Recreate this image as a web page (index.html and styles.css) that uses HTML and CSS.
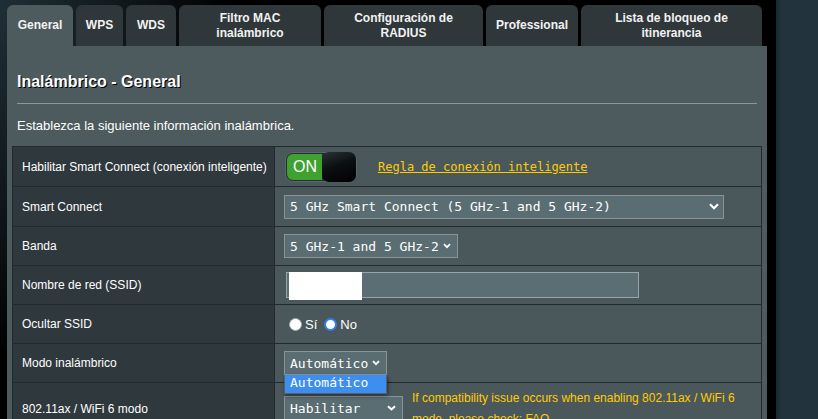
FILE: index.html
```html
<!DOCTYPE html>
<html lang="es">
<head>
<meta charset="utf-8">
<title>Inalámbrico - General</title>
<link rel="stylesheet" href="styles.css">
</head>
<body>
<div class="page">
  <div class="side-left"></div>
  <main class="main">
    <nav class="tabs">
      <div class="tab tab-active t-general">General</div>
      <div class="tab t-wps">WPS</div>
      <div class="tab t-wds">WDS</div>
      <div class="tab t-mac">Filtro MAC<br>inalámbrico</div>
      <div class="tab t-radius">Configuración de<br>RADIUS</div>
      <div class="tab t-pro">Professional</div>
      <div class="tab t-roam">Lista de bloqueo de<br>itinerancia</div>
    </nav>
    <section class="panel">
      <h1 class="title">Inalámbrico - General</h1>
      <div class="divider"></div>
      <p class="desc">Establezca la siguiente información inalámbrica.</p>
      <div class="form">
        <div class="row">
          <div class="label">Habilitar Smart Connect (conexión inteligente)</div>
          <div class="value">
            <div class="switch"><span class="switch-on">ON</span><span class="switch-knob"></span></div>
            <a class="rule-link" href="#">Regla de conexión inteligente</a>
          </div>
        </div>
        <div class="row">
          <div class="label">Smart Connect</div>
          <div class="value">
            <div class="select select-wide"><span>5 GHz Smart Connect (5 GHz-1 and 5 GHz-2)</span>
              <svg class="chev-big" width="10" height="7" viewBox="0 0 10 7"><polyline points="1,1.2 5,5.2 9,1.2" fill="none" stroke="#fff" stroke-width="2.2"/></svg>
            </div>
          </div>
        </div>
        <div class="row row-s">
          <div class="label">Banda</div>
          <div class="value">
            <div class="select"><span>5 GHz-1 and 5 GHz-2</span>
              <svg width="8" height="6" viewBox="0 0 8 6"><polyline points="1,1.2 4,4.2 7,1.2" fill="none" stroke="#fff" stroke-width="1.8"/></svg>
            </div>
          </div>
        </div>
        <div class="row row-s">
          <div class="label">Nombre de red (SSID)</div>
          <div class="value">
            <div class="text-input"><span class="redact"></span></div>
          </div>
        </div>
        <div class="row row-s">
          <div class="label">Ocultar SSID</div>
          <div class="value">
            <label class="radio-opt"><span class="radio"></span>Sí</label>
            <label class="radio-opt"><span class="radio radio-checked"></span>No</label>
          </div>
        </div>
        <div class="row row-s row-over">
          <div class="label">Modo inalámbrico</div>
          <div class="value">
            <div class="select-wrap">
              <div class="select"><span>Automático</span>
                <svg width="8" height="6" viewBox="0 0 8 6"><polyline points="1,1.2 4,4.2 7,1.2" fill="none" stroke="#fff" stroke-width="1.8"/></svg>
              </div>
              <div class="dropdown">Automático</div>
            </div>
          </div>
        </div>
        <div class="row row-last">
          <div class="label">802.11ax / WiFi 6 modo</div>
          <div class="value value-top">
            <div class="select select-hab"><span>Habilitar</span>
              <svg width="9" height="6" viewBox="0 0 9 6"><polyline points="1,1.2 4.5,4.5 8,1.2" fill="none" stroke="#fff" stroke-width="2"/></svg>
            </div>
            <p class="note">If compatibility issue occurs when enabling 802.11ax / WiFi 6 mode, please check: <a href="#" class="note-link">FAQ</a></p>
          </div>
        </div>
      </div>
    </section>
  </main>
  <div class="gutter"></div>
  <div class="side-right"></div>
</div>
</body>
</html>
```

FILE: styles.css
```css
* { box-sizing: border-box; }
html, body { margin: 0; padding: 0; }
body {
  background: #000;
  color: #fff;
  font-family: "Liberation Sans", Arial, sans-serif;
  overflow: hidden;
}
.page {
  display: flex;
  width: 818px;
  height: 419px;
  overflow: hidden;
  background: radial-gradient(ellipse 230px 360px at 0 0, #1f2f36 0%, #0e1518 60%, #000 100%);
}
.side-left { width: 7px; flex: none; }
.main { width: 760px; flex: none; display: flex; flex-direction: column; }
.gutter { width: 9px; flex: none; background: #000; }
.side-right {
  flex: 1;
  background: linear-gradient(90deg, #18262d 0, #22333d 5px, #22333d 100%);
}

/* tabs */
.tabs { display: flex; gap: 3px; padding-top: 5px; height: 46px; flex: none; }
.tab {
  height: 41px;
  border-radius: 6px 6px 0 0;
  background: #30373b;
  color: #f2f2f2;
  font: bold 12px/15px "Liberation Sans", Arial, sans-serif;
  display: flex;
  align-items: center;
  justify-content: center;
  text-align: center;
}
.tab-active { background: #4d5a5e; }
.t-general { width: 66px; }
.t-wps { width: 47px; }
.t-wds { width: 50px; }
.t-mac { width: 142px; }
.t-radius { width: 159px; }
.t-pro { width: 92px; }
.t-roam { width: 181px; }

/* panel */
.panel { flex: 1; background: #4d5a5e; padding: 26px 5px 0; }
.title {
  margin: 0 0 0 5px;
  font: bold 16px/20px "Liberation Sans", Arial, sans-serif;
  color: #fff;
  text-shadow: 1px 1px 0 #000;
}
.divider { height: 1px; background: #8a989c; margin: 11px 5px 0; }
.desc { margin: 14px 0 0 5px; font-size: 13px; line-height: 16px; color: #fff; }

/* form table */
.form { margin-top: 12px; width: 750px; border: 1px solid #222a2e; border-bottom: 0; }
.row { display: flex; height: 40px; border-bottom: 1px solid #222a2e; }
.row-s { height: 39px; }
.row-last { height: 51px; border-bottom: 0; }
.row-over { position: relative; z-index: 2; }
.label {
  width: 262px;
  flex: none;
  background: #2f383d;
  border-right: 1px solid #222a2e;
  padding-left: 9px;
  display: flex;
  align-items: center;
  font-size: 12px;
  color: #fff;
}
.value {
  flex: 1;
  background: #4a585c;
  padding-left: 9px;
  display: flex;
  align-items: center;
}
.value-top { align-items: flex-start; padding-top: 5px; }

/* switch */
.switch {
  width: 72px;
  height: 30px;
  margin-left: 1px;
  border: 1px solid #5b676b;
  border-radius: 8px;
  background: #263034;
  display: flex;
  align-items: center;
  padding-left: 1px;
}
.switch-on {
  width: 36px;
  height: 26px;
  background: #3ea130;
  border-radius: 6px 0 0 6px;
  color: #fff;
  font: 16px/26px "Liberation Sans", Arial, sans-serif;
  padding-left: 6px;
}
.switch-knob {
  width: 35px;
  height: 30px;
  margin-top: -1px;
  margin-bottom: -1px;
  border-radius: 7px;
  background: linear-gradient(160deg, #2a3337 0%, #0b1012 45%, #000 100%);
}
.rule-link {
  margin-left: 21px;
  color: #ffcc00;
  font: 12px "DejaVu Sans Mono", "Liberation Mono", monospace;
  text-decoration: underline;
}

/* selects */
.select {
  display: inline-flex;
  align-items: center;
  gap: 4px;
  height: 24px;
  border: 1px solid #8a9396;
  background: #5a6d72;
  color: #fff;
  padding: 0 6px 0 5px;
  font: 13px "DejaVu Sans Mono", "Liberation Mono", monospace;
  white-space: nowrap;
}
.select-wide { width: 440px; justify-content: space-between; padding-right: 4px; }
.select-hab { width: 119px; justify-content: space-between; margin-top: 8px; flex: none; }
.select-wrap { position: relative; }
.dropdown {
  position: absolute;
  left: 0;
  top: 24px;
  width: 100%;
  height: 19px;
  background: #3c8ef0;
  color: #fff;
  font: 13px/15px "DejaVu Sans Mono", "Liberation Mono", monospace;
  padding-left: 5px;
  box-shadow: 1px 2px 4px rgba(0, 0, 0, 0.45);
  border: 1px solid #56606a;
  border-top: 0;
}

/* text input */
.text-input {
  position: relative;
  margin-left: 2px;
  width: 353px;
  height: 26px;
  border: 1px solid #98a4a7;
  background: #5b6e73;
}
.redact {
  position: absolute;
  left: 2px;
  top: -1px;
  width: 73px;
  height: 28px;
  background: #fff;
}

/* radios */
.radio-opt {
  display: inline-flex;
  align-items: center;
  font-size: 13px;
  color: #fff;
  margin-right: 7px;
}
.radio {
  width: 13px;
  height: 13px;
  margin: 0 3px 0 5px;
  border-radius: 50%;
  background: #fff;
  border: 1px solid #9aa;
}
.radio-opt + .radio-opt .radio { margin-left: 0; }
.radio-checked { border: 2.5px solid #2f7ff2; background: #fff; }

/* note */
.note {
  margin: 0 0 0 9px;
  width: 345px;
  font-size: 12px;
  line-height: 21px;
  color: #ffcc00;
}
.note-link { color: #ffcc00; text-decoration: underline; }
```
